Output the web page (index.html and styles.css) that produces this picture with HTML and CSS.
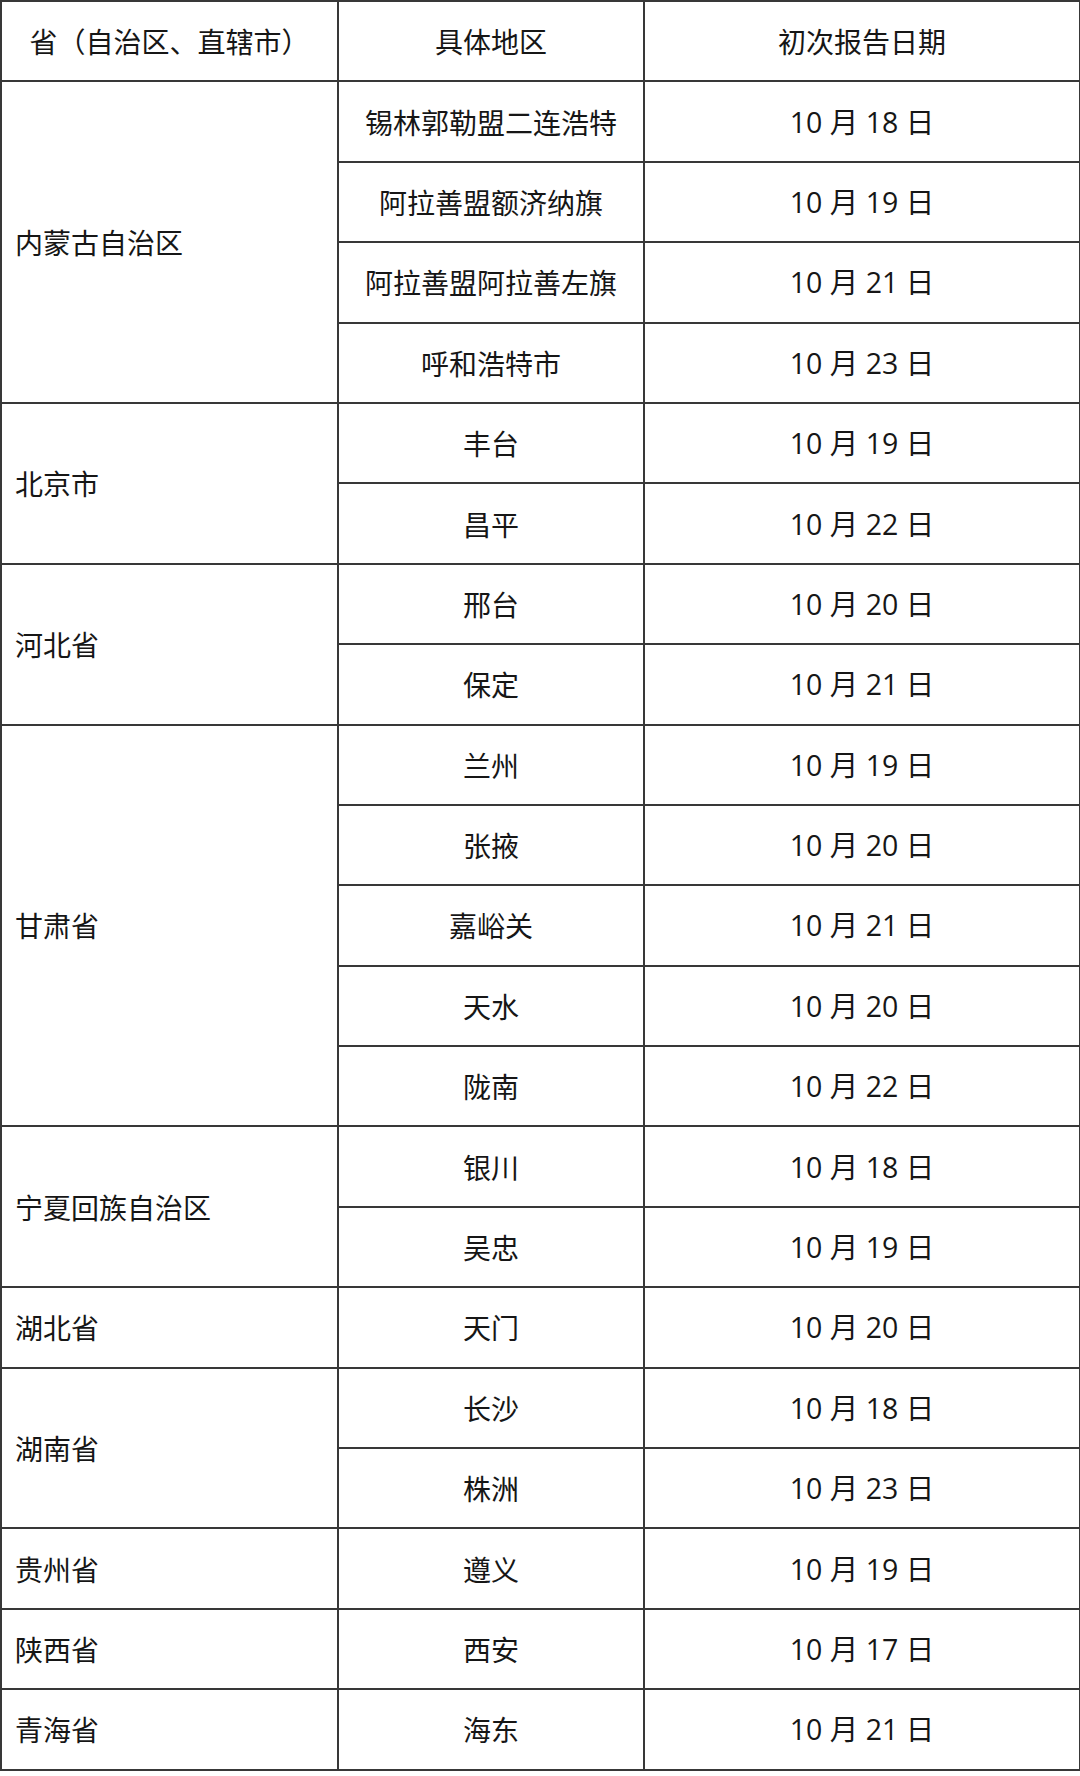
FILE: index.html
```html
<!DOCTYPE html>
<html lang="zh">
<head>
<meta charset="utf-8">
<link rel="stylesheet" href="styles.css">
</head>
<body>
<table class="tbl">
  <colgroup>
    <col class="c1"><col class="c2"><col class="c3">
  </colgroup>
  <thead>
    <tr class="head"><th>省（自治区、直辖市）</th><th>具体地区</th><th>初次报告日期</th></tr>
  </thead>
  <tbody>
    <tr><td class="prov" rowspan="4">内蒙古自治区</td><td>锡林郭勒盟二连浩特</td><td class="date">10 月 18 日</td></tr>
    <tr><td>阿拉善盟额济纳旗</td><td class="date">10 月 19 日</td></tr>
    <tr><td>阿拉善盟阿拉善左旗</td><td class="date">10 月 21 日</td></tr>
    <tr><td>呼和浩特市</td><td class="date">10 月 23 日</td></tr>
    <tr><td class="prov" rowspan="2">北京市</td><td>丰台</td><td class="date">10 月 19 日</td></tr>
    <tr><td>昌平</td><td class="date">10 月 22 日</td></tr>
    <tr><td class="prov" rowspan="2">河北省</td><td>邢台</td><td class="date">10 月 20 日</td></tr>
    <tr><td>保定</td><td class="date">10 月 21 日</td></tr>
    <tr><td class="prov" rowspan="5">甘肃省</td><td>兰州</td><td class="date">10 月 19 日</td></tr>
    <tr><td>张掖</td><td class="date">10 月 20 日</td></tr>
    <tr><td>嘉峪关</td><td class="date">10 月 21 日</td></tr>
    <tr><td>天水</td><td class="date">10 月 20 日</td></tr>
    <tr><td>陇南</td><td class="date">10 月 22 日</td></tr>
    <tr><td class="prov" rowspan="2">宁夏回族自治区</td><td>银川</td><td class="date">10 月 18 日</td></tr>
    <tr><td>吴忠</td><td class="date">10 月 19 日</td></tr>
    <tr><td class="prov">湖北省</td><td>天门</td><td class="date">10 月 20 日</td></tr>
    <tr><td class="prov" rowspan="2">湖南省</td><td>长沙</td><td class="date">10 月 18 日</td></tr>
    <tr><td>株洲</td><td class="date">10 月 23 日</td></tr>
    <tr><td class="prov">贵州省</td><td>遵义</td><td class="date">10 月 19 日</td></tr>
    <tr><td class="prov">陕西省</td><td>西安</td><td class="date">10 月 17 日</td></tr>
    <tr><td class="prov">青海省</td><td>海东</td><td class="date">10 月 21 日</td></tr>
  </tbody>
</table>
</body>
</html>
```
FILE: styles.css
```css
html, body {
  margin: 0;
  padding: 0;
  background: #ffffff;
}
body {
  font-family: "Noto Sans CJK SC", "Noto Sans", sans-serif;
  color: #161616;
}
.tbl {
  border-collapse: collapse;
  table-layout: fixed;
  width: 1079px;
  margin: 0;
}
.c1 { width: 337px; }
.c2 { width: 306px; }
.c3 { width: 436px; }
.tbl th, .tbl td {
  border: 2px solid #383838;
  padding: 0;
  text-align: center;
  vertical-align: middle;
  font-size: 28px;
  font-weight: 400;
  line-height: 32px;
  height: 78.4px;
}
.tbl .head th {
  height: 78.4px;
}
.tbl td.prov {
  text-align: left;
  padding-left: 13px;
}
.tbl td.date {
  font-family: "Open Sans", "Noto Sans CJK SC", sans-serif;
  font-size: 28.5px;
}
```
